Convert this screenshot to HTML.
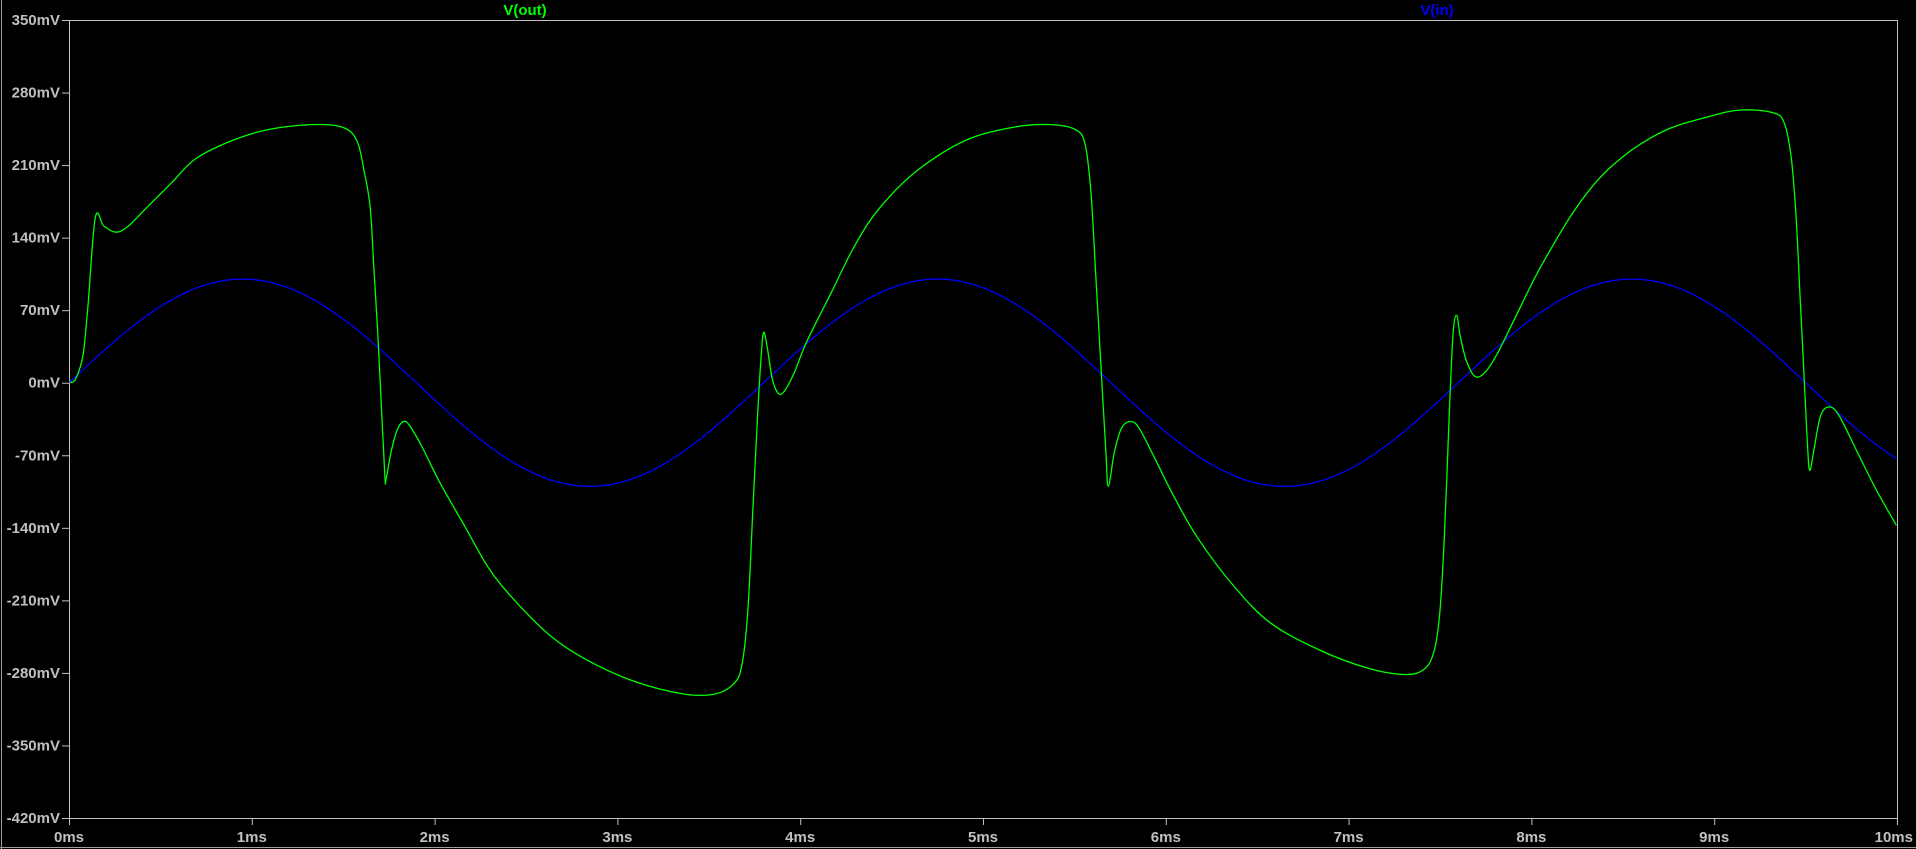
<!DOCTYPE html>
<html><head><meta charset="utf-8"><style>
html,body{margin:0;padding:0;background:#000;width:1916px;height:849px;overflow:hidden}
svg{display:block}
text{font-family:"Liberation Sans",sans-serif;font-weight:bold;font-size:15px}
</style></head><body>
<svg id="s" width="1916" height="849" xmlns="http://www.w3.org/2000/svg">
<rect width="1916" height="849" fill="#000"/>
<line x1="1.5" y1="0" x2="1.5" y2="849" stroke="#a0a0a0"/>
<line x1="0" y1="847.5" x2="1916" y2="847.5" stroke="#a0a0a0"/>
<rect x="69.5" y="20.5" width="1828" height="798" fill="none" stroke="#c0c0c0" stroke-width="1"/>
<g id="ax" fill="#c0c0c0" stroke="#c0c0c0"></g>
<text x="525" y="15" fill="#00ff00" text-anchor="middle">V(out)</text>
<text x="1437" y="15" fill="#0000ff" text-anchor="middle">V(in)</text>
<polyline id="vin" fill="none" stroke="#0000ff" stroke-width="1.3"/>
<path id="vout" fill="none" stroke="#00ff00" stroke-width="1.3" stroke-linejoin="round"/>
</svg>
<script>
var L=69,R=1897,T=20,B=818,NS="http://www.w3.org/2000/svg";
var ax=document.getElementById('ax');
function el(n,a,t){var e=document.createElementNS(NS,n);for(var k in a)e.setAttribute(k,a[k]);if(t)e.textContent=t;ax.appendChild(e);}
for(var i=0;i<=11;i++){var mv=350-70*i,y=T+i*(B-T)/11;
 el('line',{x1:62,y1:y+.5,x2:69,y2:y+.5,'stroke-width':1});
 el('text',{x:60,y:y+5,'text-anchor':'end',stroke:'none'},mv+'mV');}
for(var i=0;i<=10;i++){var x=L+i*(R-L)/10;
 el('line',{x1:x+.5,y1:818,x2:x+.5,y2:825,'stroke-width':1});
 el('text',{x:(i==10?1913:x),y:842,'text-anchor':(i==10?'end':'middle'),stroke:'none'},i+'ms');
}
var p=[];for(var t=0;t<=10;t+=0.02){p.push((L+t*(R-L)/10).toFixed(1)+','+(T+(350-100*Math.sin(2*Math.PI*t/3.8))*(B-T)/770).toFixed(1));}
document.getElementById('vin').setAttribute('points',p.join(' '));
var d=[57,313,62,310,68,290,72,250,78,178,85,185,95,190,105,185,120,170,140,150,160,130,190,115,220,106,255,102,280,104,292,115,298,140,303,170,306,220,309,270,312,330,315,390,316,392,320,370,325,352,330,345,335,348,345,365,360,395,380,430,400,465,420,490,450,520,480,540,520,558,560,568,585,568,600,560,607,545,612,500,616,420,620,340,623,290,625,272,628,285,632,310,637,322,642,320,650,305,660,280,680,240,700,200,720,170,750,140,790,115,830,104,860,102,880,106,888,118,893,160,897,230,901,300,905,370,907,398,912,370,918,350,925,345,932,350,945,375,960,405,980,440,1010,480,1040,510,1080,532,1120,547,1150,552,1165,548,1173,535,1178,505,1182,440,1186,340,1189,275,1192,258,1195,275,1200,295,1207,308,1215,305,1225,290,1240,260,1260,220,1290,170,1320,135,1360,108,1400,95,1425,90,1450,92,1460,100,1466,130,1470,180,1473,240,1476,300,1479,360,1481,385,1485,365,1490,340,1497,333,1505,340,1520,370,1535,400,1552,430];
var s=1916/1568,P=[];for(var i=0;i<d.length;i+=2)P.push([d[i]*s,d[i+1]*s]);
var str='M'+P[0][0].toFixed(1)+','+P[0][1].toFixed(1);
for(var i=0;i<P.length-1;i++){var p0=P[Math.max(i-1,0)],p1=P[i],p2=P[i+1],p3=P[Math.min(i+2,P.length-1)];
 var k=1/6;
 var c1=[p1[0]+(p2[0]-p0[0])*k,p1[1]+(p2[1]-p0[1])*k],c2=[p2[0]-(p3[0]-p1[0])*k,p2[1]-(p3[1]-p1[1])*k];
 str+=' C'+c1[0].toFixed(1)+','+c1[1].toFixed(1)+' '+c2[0].toFixed(1)+','+c2[1].toFixed(1)+' '+p2[0].toFixed(1)+','+p2[1].toFixed(1);}
document.getElementById('vout').setAttribute('d',str);
</script>
</body></html>
